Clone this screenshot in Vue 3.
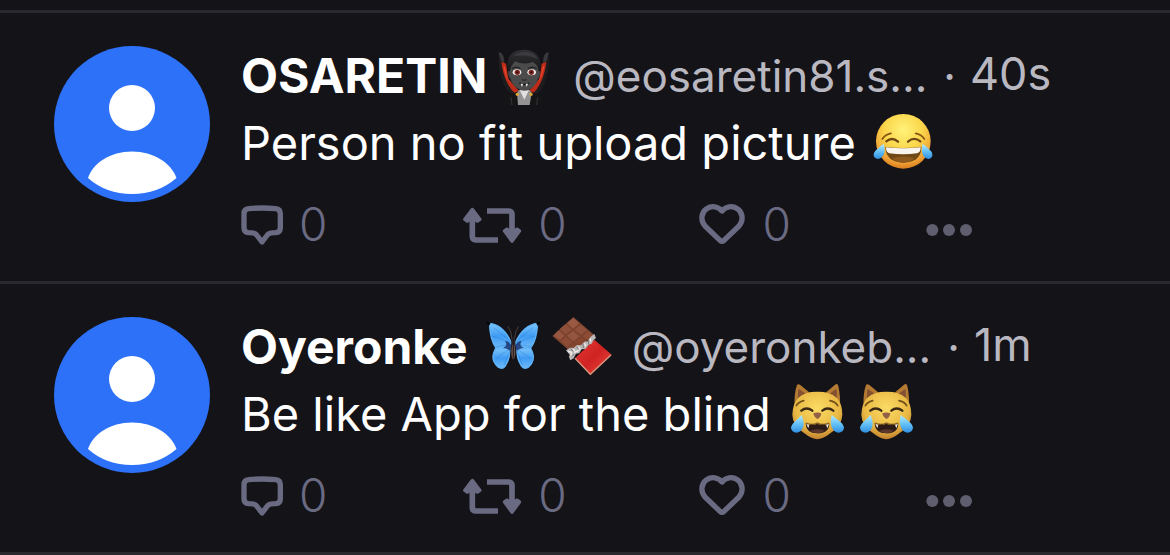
<script setup>
const posts = [
  {
    id: 1,
    name: 'OSARETIN',
    tight: true,
    nameEmoji: [{ id: 'vampire', label: 'vampire' }],
    handle: '@eosaretin81.s...',
    time: '40s',
    text: 'Person no fit upload picture',
    textEmoji: [{ id: 'joy', label: 'face with tears of joy' }],
  },
  {
    id: 2,
    name: 'Oyeronke',
    tight: false,
    nameEmoji: [
      { id: 'butterfly', label: 'butterfly' },
      { id: 'chocolate', label: 'chocolate bar' },
    ],
    handle: '@oyeronkeb...',
    time: '1m',
    text: 'Be like App for the blind',
    textEmoji: [
      { id: 'cat', label: 'cat with tears of joy' },
      { id: 'cat', label: 'cat with tears of joy' },
    ],
  },
]
</script>

<template>
  <svg class="sprites" width="0" height="0" aria-hidden="true">
    <defs>
      <radialGradient id="gold" cx="50%" cy="30%" r="70%">
        <stop offset="0" stop-color="#fff27a" />
        <stop offset="0.5" stop-color="#fbd64b" />
        <stop offset="0.85" stop-color="#efa035" />
        <stop offset="1" stop-color="#d97e20" />
      </radialGradient>
      <radialGradient id="fur" cx="50%" cy="35%" r="68%">
        <stop offset="0" stop-color="#fbdc66" />
        <stop offset="0.65" stop-color="#e9b944" />
        <stop offset="1" stop-color="#b9772c" />
      </radialGradient>
      <linearGradient id="tear" x1="0" y1="0" x2="0" y2="1">
        <stop offset="0" stop-color="#b4ecff" />
        <stop offset="0.55" stop-color="#5fbdf5" />
        <stop offset="1" stop-color="#2f8ee0" />
      </linearGradient>
      <linearGradient id="wing" x1="0" y1="0" x2="0" y2="1">
        <stop offset="0" stop-color="#7cc6fb" />
        <stop offset="0.5" stop-color="#3f9cf3" />
        <stop offset="1" stop-color="#6fbcfa" />
      </linearGradient>
      <linearGradient id="wrapper" x1="0" y1="0" x2="1" y2="1">
        <stop offset="0" stop-color="#e63a34" />
        <stop offset="0.5" stop-color="#cf2323" />
        <stop offset="1" stop-color="#ee4a40" />
      </linearGradient>
      <linearGradient id="hair" x1="0" y1="0" x2="0" y2="1">
        <stop offset="0" stop-color="#303034" />
        <stop offset="1" stop-color="#19191b" />
      </linearGradient>
    </defs>

    <symbol id="vampire" viewBox="12 15 180 180">
      <path d="M29 38C36 37 42 42 44 52L64 122L88 160L80 172L54 150C34 118 25 72 29 38Z" fill="#1d1c1e" />
      <path d="M179 38C172 37 166 42 164 52L146 122L122 160L130 172L156 150C176 118 184 72 179 38Z" fill="#1d1c1e" />
      <path d="M29 38C36 37 41 42 44 52L46 68L36 62Z" fill="#3a393d" />
      <path d="M179 38C172 37 167 42 164 52L162 68L173 62Z" fill="#3a393d" />
      <path d="M37 65L51 71L58 116L92 155L83 165C58 143 42 110 37 65Z" fill="#bd2c19" />
      <path d="M172 65L158 71L151 116L118 155L127 165C152 143 167 110 172 65Z" fill="#bd2c19" />
      <path d="M43 78L48 80Q52 112 66 132Q48 112 43 78ZM166 78L161 80Q157 112 143 132Q161 112 166 78Z" fill="#e8452c" />
      <path d="M47 195Q48 164 68 162L92 152H120L142 162Q162 164 163 195Z" fill="#161516" />
      <path d="M84 158L90 150H122L128 158L122 195H87Z" fill="#949292" />
      <path d="M92 150H120L106 179Z" fill="#e2dfe0" />
      <path d="M66 172L69 195M146 172L143 195" stroke="#353438" stroke-width="3" />
      <path d="M58 94L66 92V116Q56 113 58 94ZM153 94L145 92V116Q155 113 153 94Z" fill="#464547" />
      <path d="M63 84Q65 52 105 52Q146 52 148 84V110Q145 132 128 145Q106 160 85 145Q66 132 63 110Z" fill="#4c4b4c" />
      <path d="M57 90C50 46 74 30 98 30C132 26 161 44 154 92L147 84Q142 72 132 66Q102 76 78 64Q66 76 63 92Z" fill="url(#hair)" />
      <path d="M74 48Q92 32 122 38Q142 43 146 57Q122 42 74 48Z" fill="#3c3c40" />
      <path d="M69 86Q81 77 94 86M118 86Q131 77 143 86" fill="none" stroke="#202022" stroke-width="4" />
      <ellipse cx="84" cy="97" rx="13" ry="9" fill="#eee9e7" />
      <ellipse cx="128" cy="97" rx="13" ry="9" fill="#eee9e7" />
      <circle cx="85" cy="97" r="8" fill="#812824" />
      <circle cx="127" cy="97" r="8" fill="#812824" />
      <circle cx="85" cy="97" r="3" fill="#190a0b" />
      <circle cx="127" cy="97" r="3" fill="#190a0b" />
      <path d="M99 118Q106 124 113 118" stroke="#303031" stroke-width="4" fill="none" />
      <path d="M91 129Q106 137 121 129" stroke="#202021" stroke-width="5" fill="none" />
      <path d="M95 131H102L99 141ZM110 131H117L113 141Z" fill="#f4f3f5" />
      <circle cx="85" cy="163" r="5" fill="#dbab3a" />
      <circle cx="126" cy="163" r="5" fill="#dbab3a" />
    </symbol>

    <symbol id="joy" viewBox="39 21 180 180">
      <circle cx="130" cy="109" r="82" fill="url(#gold)" />
      <path d="M67 102Q76 88 93 85M167 85Q184 88 193 102" fill="none" stroke="#8a5713" stroke-width="5" stroke-linecap="round" />
      <path d="M79 109Q96 94 114 110M144 110Q162 94 181 109" fill="none" stroke="#704713" stroke-width="7" stroke-linecap="round" />
      <path d="M76 126Q130 132 184 126Q184 172 130 173Q78 172 76 126Z" fill="#704814" />
      <path d="M78 127Q130 133 182 127Q182 143 171 145Q130 151 88 145Q78 143 78 127Z" fill="#f8f5ef" />
      <path d="M97 160Q130 149 163 160Q149 173 130 173Q109 173 97 160Z" fill="#8e5a1d" />
      <path d="M71 116Q79 145 65 157Q54 167 43 157Q36 145 52 132Q62 123 71 116Z" fill="url(#tear)" />
      <path d="M188 116Q181 145 194 157Q206 167 215 157Q222 145 207 132Q197 123 188 116Z" fill="url(#tear)" />
    </symbol>

    <symbol id="butterfly" viewBox="15 18 180 180">
      <path d="M25 37Q36 32 61 43Q87 53 101 94L98 126Q92 170 75 175Q50 180 43 144Q39 128 51 113Q34 93 32 60Q23 47 25 37Z" fill="#10151f" />
      <path d="M187 37Q177 32 151 43Q126 53 111 94L114 126Q120 170 138 175Q162 180 168 144Q171 128 160 113Q178 93 180 60Q189 47 187 37Z" fill="#10151f" />
      <g fill="url(#wing)" stroke="#62b4f8" stroke-width="4" stroke-linejoin="round">
        <path d="M34 40Q76 44 99 96L96 114Q75 118 53 112Q37 92 34 40Z" />
        <path d="M179 40Q137 44 113 96L116 114Q137 118 159 112Q176 92 179 40Z" />
        <path d="M53 115L95 116Q97 145 82 168Q73 180 60 171Q38 151 48 126Z" />
        <path d="M158 115L117 116Q115 145 130 168Q140 180 152 171Q173 151 163 126Z" />
      </g>
      <path d="M99 95L48 54M99 98L42 78M98 103L54 110M96 116L55 144M97 119L78 166M113 95L164 54M113 98L170 78M114 103L158 110M116 116L156 144M115 119L134 166" stroke="#2375cf" stroke-width="2" opacity="0.5" />
      <path d="M81 93Q94 93 101 108L95 122Q88 115 75 113Q91 107 81 93ZM131 93Q118 93 111 108L117 122Q124 115 137 113Q121 107 131 93Z" fill="#172e68" opacity="0.8" />
      <path d="M24 37Q30 34 38 38L33 48ZM188 37Q182 34 174 38L179 48Z" fill="#050507" />
      <path d="M102 87L98 64L90 50M109 87L114 64L121 50" fill="none" stroke="#4a3e3b" stroke-width="3" stroke-linecap="round" />
      <ellipse cx="106" cy="96" rx="6" ry="15" fill="#292427" />
      <ellipse cx="106" cy="125" rx="6" ry="23" fill="#695044" />
      <path d="M106 82V145" stroke="#211d22" stroke-width="3" />
    </symbol>

    <symbol id="chocolate" viewBox="222 18 180 180">
      <path d="M286 21L349 75L281 128L223 78Z" fill="#7d432e" />
      <path d="M286 24L304 40L285 56L267 39Z" fill="#995943" />
      <path d="M308 44L327 60L309 75L289 59Z" fill="#90513c" />
      <path d="M331 64L347 77L330 91L313 78Z" fill="#8c4c36" />
      <path d="M263 42L281 59L263 73L245 57Z" fill="#8f503a" />
      <path d="M285 63L305 79L286 94L267 77Z" fill="#95563f" />
      <path d="M309 82L326 96L308 109L290 97Z" fill="#86452f" />
      <path d="M241 61L259 77L246 89L227 77Z" fill="#96563f" />
      <path d="M263 81L282 97L268 111L250 93Z" fill="#8d4c36" />
      <path d="M286 101L304 114L291 124L272 113Z" fill="#854630" />
      <path d="M291 145L349 89L401 134L337 195Z" fill="url(#wrapper)" />
      <path d="M291 145L337 193L399 135" fill="none" stroke="#d49a80" stroke-width="4" />
      <path d="M264 121L276 113L287 114L297 105L309 106L319 95L329 94L338 80L349 72L354 84L347 90L341 101L332 104L323 116L311 118L304 130L294 131L287 145L277 151L273 141L275 134Z" fill="#bcb9b8" />
      <path d="M269 124L281 127L278 137M286 117L291 127L302 121M302 110L306 119M320 100L323 109M337 85L338 95" fill="none" stroke="#f1eeeb" stroke-width="4" />
      <path d="M277 116L286 124M296 110L301 117M315 101L316 114M332 92L331 102M282 139L289 133" stroke="#797578" stroke-width="3" />
    </symbol>

    <symbol id="cat" viewBox="30 24 180 180">
      <path d="M50 105Q47 57 57 30Q60 25 68 31L96 54H142L171 29Q179 24 181 33Q188 63 186 105Z" fill="#b67b32" />
      <path d="M59 74L61 42Q73 47 88 62ZM177 74L176 42Q163 47 149 62Z" fill="#835132" />
      <path d="M43 119Q45 49 118 50Q193 49 193 119Q193 151 153 178Q118 207 83 178Q43 151 43 119Z" fill="url(#fur)" />
      <path d="M55 92Q60 82 77 77M156 77Q173 81 179 92" fill="none" stroke="#735018" stroke-width="5" stroke-linecap="round" />
      <path d="M70 107Q86 94 103 107M133 107Q149 94 166 107" fill="none" stroke="#382814" stroke-width="7" stroke-linecap="round" />
      <path d="M106 115Q118 110 130 115Q128 128 119 132Q108 128 106 115Z" fill="#926044" />
      <path d="M83 144Q104 153 118 144Q132 153 154 144" fill="none" stroke="#805c21" stroke-width="4" />
      <path d="M83 146Q104 153 118 146Q132 153 154 146Q154 174 118 175Q84 174 83 146Z" fill="#2b1b16" />
      <path d="M96 167Q118 158 141 167Q130 175 118 175Q105 174 96 167Z" fill="#5c372b" />
      <path d="M85 147L94 149L91 160ZM144 149L153 147L148 160Z" fill="#eee8dc" />
      <path d="M71 120Q83 150 71 165Q57 180 43 168Q33 155 50 140Q63 128 71 120Z" fill="url(#tear)" />
      <path d="M161 120Q154 150 166 165Q180 180 194 168Q204 155 187 140Q173 129 161 120Z" fill="url(#tear)" />
    </symbol>
  </svg>

  <main class="feed">
    <article v-for="post in posts" :key="post.id" class="post">
      <a class="avatar" href="#" :aria-label="post.name">
        <svg viewBox="0 0 156 156" aria-hidden="true">
          <circle cx="78" cy="78" r="78" fill="#2c71f7" />
          <circle cx="78" cy="62" r="23" fill="#fff" />
          <path d="M34 132C39 117 56 105.500 78 105.500C100 105.500 117 117 122.500 132Q104 148 78 148Q52 148 34 132Z" fill="#fff" />
        </svg>
      </a>
      <div class="content">
        <header class="head">
          <a class="name" :class="{ tight: post.tight }" href="#">
            <span>{{ post.name }}</span>
            <svg v-for="(e, i) in post.nameEmoji" :key="i" class="emoji" role="img" :aria-label="e.label">
              <use :href="'#' + e.id" />
            </svg>
          </a>
          <a class="handle" href="#">{{ post.handle }}</a>
          <span class="dot">·</span>
          <time class="time">{{ post.time }}</time>
        </header>
        <p class="text">
          <span>{{ post.text }}</span>
          <svg v-for="(e, i) in post.textEmoji" :key="i" class="emoji" role="img" :aria-label="e.label">
            <use :href="'#' + e.id" />
          </svg>
        </p>
        <div class="actions">
          <button type="button" aria-label="Reply, 0">
            <svg class="reply" viewBox="34 24 126 126" aria-hidden="true">
              <path d="M57 41Q97 37 138 41Q152 42 152 56V98Q152 112 138 113Q119 113 113 120L97 141L81 120Q75 113 57 113Q43 112 43 98V56Q43 42 57 41Z" fill="none" stroke="#6a6a82" stroke-width="16" stroke-linejoin="round" />
            </svg>
            <span>0</span>
          </button>
          <button type="button" aria-label="Repost, 0">
            <svg class="repost" viewBox="696 24 180 126" aria-hidden="true">
              <path d="M727 60V124Q727 135 738 135H804M771 48H836Q846 48 846 59V124" fill="none" stroke="#6a6a82" stroke-width="17" />
              <path d="M727 44L705 73L712 78L727 68L742 78L749 73ZM846 138L824 108L831 103L846 113L861 103L868 108Z" fill="#6a6a82" stroke="#6a6a82" stroke-width="11" stroke-linejoin="round" />
            </svg>
            <span>0</span>
          </button>
          <button type="button" aria-label="Like, 0">
            <svg class="like" viewBox="27 24 144 126" aria-hidden="true">
              <path d="M99 48C88 34 68 31 53 41C36 53 34 77 48 93L93 136Q99 141 105 136L150 93C164 77 162 53 145 41C130 31 110 34 99 48Z" fill="none" stroke="#6a6a82" stroke-width="16" stroke-linejoin="round" />
            </svg>
            <span>0</span>
          </button>
          <button type="button" aria-label="More">
            <svg class="more" viewBox="705 24 144 126" aria-hidden="true">
              <g fill="#5e5e6e">
                <circle cx="727" cy="105" r="18" />
                <circle cx="777" cy="105" r="18" />
                <circle cx="828" cy="105" r="18" />
              </g>
            </svg>
          </button>
        </div>
      </div>
    </article>
  </main>
</template>

<style>
body {
  margin: 0;
  background: #141318;
}
</style>

<style scoped>
.sprites {
  position: absolute;
}
.feed {
  padding-top: 10px;
  font-family: Inter, "Liberation Sans", sans-serif;
  font-size: 47px;
  color: #fff;
}
.post {
  display: flex;
  gap: 31px;
  padding: 29px 39px 27px 54px;
  border-top: 3px solid #29282e;
}
.post:last-child {
  border-bottom: 3px solid #29282e;
}
a {
  color: inherit;
  text-decoration: none;
}
.avatar {
  flex: none;
  width: 156px;
  margin-top: 4px;
}
.avatar svg {
  display: block;
  width: 100%;
}
.content {
  flex: 1;
  min-width: 0;
}
.head,
.text,
.name {
  display: flex;
  line-height: 67px;
  white-space: nowrap;
}
.head {
  height: 67px;
}
.text {
  margin: 0;
  gap: 9px;
}
.name {
  gap: 9px;
  font-size: 48px;
  font-weight: 700;
}
.emoji {
  flex: none;
  width: 60px;
  height: 60px;
  margin-top: 3px;
}
.text span {
  margin-right: 8px;
}
.name span {
  margin-right: 6px;
}
.name.tight {
  gap: 6px;
}
.name.tight span {
  margin-right: 0;
}
.handle,
.dot,
.time {
  font-size: 44px;
  line-height: 69px;
  color: #b9b8c1;
}
.handle {
  margin-left: 20px;
}
.dot {
  margin: 0 14px 0 16px;
}
.time {
  font-size: 45px;
  line-height: 63px;
}
.actions {
  display: grid;
  grid-template-columns: 222fr 237fr 227fr 207fr;
  margin-top: 18px;
}
button {
  display: flex;
  align-items: center;
  gap: 16px;
  padding: 0;
  border: 0;
  background: none;
  font: inherit;
  font-size: 46px;
  font-weight: 300;
  line-height: 60px;
  color: #6a6a82;
  cursor: pointer;
}
button svg {
  flex: none;
  height: 42px;
}
.reply {
  width: 42px;
}
.repost {
  width: 60px;
}
.like,
.more {
  width: 48px;
}
</style>
